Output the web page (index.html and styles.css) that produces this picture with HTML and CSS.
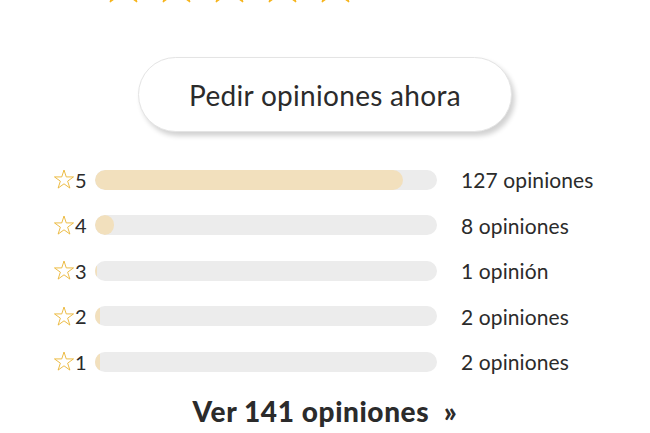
FILE: index.html
```html
<!DOCTYPE html>
<html lang="es">
<head>
  <meta charset="UTF-8" />
  <title>Opiniones</title>
  <link rel="stylesheet" href="styles.css">
</head>
<body>
  <!-- Estrellas de arriba -->
  <div class="top-stars">
    <svg viewBox="-1 -1 2 2" class="big-star"><polygon points="0,-1 0.2245,-0.309 0.951,-0.309 0.363,0.118 0.588,0.809 0,0.382 -0.588,0.809 -0.363,0.118 -0.951,-0.309 -0.2245,-0.309" /></svg>
    <svg viewBox="-1 -1 2 2" class="big-star"><polygon points="0,-1 0.2245,-0.309 0.951,-0.309 0.363,0.118 0.588,0.809 0,0.382 -0.588,0.809 -0.363,0.118 -0.951,-0.309 -0.2245,-0.309" /></svg>
    <svg viewBox="-1 -1 2 2" class="big-star"><polygon points="0,-1 0.2245,-0.309 0.951,-0.309 0.363,0.118 0.588,0.809 0,0.382 -0.588,0.809 -0.363,0.118 -0.951,-0.309 -0.2245,-0.309" /></svg>
    <svg viewBox="-1 -1 2 2" class="big-star"><polygon points="0,-1 0.2245,-0.309 0.951,-0.309 0.363,0.118 0.588,0.809 0,0.382 -0.588,0.809 -0.363,0.118 -0.951,-0.309 -0.2245,-0.309" /></svg>
    <svg viewBox="-1 -1 2 2" class="big-star"><polygon points="0,-1 0.2245,-0.309 0.951,-0.309 0.363,0.118 0.588,0.809 0,0.382 -0.588,0.809 -0.363,0.118 -0.951,-0.309 -0.2245,-0.309" /></svg>
  </div>

  <div class="ask">
    <button class="ask-button">Pedir opiniones ahora</button>
  </div>

  <!-- Desglose por estrellas -->
  <div class="breakdown">
    <div class="row">
      <span class="label"><svg viewBox="-1.1 -1.1 2.2 2.1" class="small-star"><polygon points="0,-1 0.2245,-0.309 0.951,-0.309 0.363,0.118 0.588,0.809 0,0.382 -0.588,0.809 -0.363,0.118 -0.951,-0.309 -0.2245,-0.309" /></svg>5</span>
      <div class="track"><div class="fill" style="width: 90%"></div></div>
      <span class="count">127 opiniones</span>
    </div>
    <div class="row">
      <span class="label"><svg viewBox="-1.1 -1.1 2.2 2.1" class="small-star"><polygon points="0,-1 0.2245,-0.309 0.951,-0.309 0.363,0.118 0.588,0.809 0,0.382 -0.588,0.809 -0.363,0.118 -0.951,-0.309 -0.2245,-0.309" /></svg>4</span>
      <div class="track"><div class="fill" style="width: 5.7%"></div></div>
      <span class="count">8 opiniones</span>
    </div>
    <div class="row">
      <span class="label"><svg viewBox="-1.1 -1.1 2.2 2.1" class="small-star"><polygon points="0,-1 0.2245,-0.309 0.951,-0.309 0.363,0.118 0.588,0.809 0,0.382 -0.588,0.809 -0.363,0.118 -0.951,-0.309 -0.2245,-0.309" /></svg>3</span>
      <div class="track"><div class="fill" style="width: 0.7%"></div></div>
      <span class="count">1 opinión</span>
    </div>
    <div class="row">
      <span class="label"><svg viewBox="-1.1 -1.1 2.2 2.1" class="small-star"><polygon points="0,-1 0.2245,-0.309 0.951,-0.309 0.363,0.118 0.588,0.809 0,0.382 -0.588,0.809 -0.363,0.118 -0.951,-0.309 -0.2245,-0.309" /></svg>2</span>
      <div class="track"><div class="fill" style="width: 1.4%"></div></div>
      <span class="count">2 opiniones</span>
    </div>
    <div class="row">
      <span class="label"><svg viewBox="-1.1 -1.1 2.2 2.1" class="small-star"><polygon points="0,-1 0.2245,-0.309 0.951,-0.309 0.363,0.118 0.588,0.809 0,0.382 -0.588,0.809 -0.363,0.118 -0.951,-0.309 -0.2245,-0.309" /></svg>1</span>
      <div class="track"><div class="fill" style="width: 1.4%"></div></div>
      <span class="count">2 opiniones</span>
    </div>
  </div>

  <a class="see-all" href="#">Ver 141 opiniones&nbsp;&nbsp;»</a>
</body>
</html>
```

FILE: styles.css
```css
body {
  margin: 0;
  font-family: Lato, "Open Sans", sans-serif;
  color: #2b2b2b;
  background: #fff;
  overflow: hidden;
}

.top-stars {
  display: flex;
  gap: 8px;
  padding-left: 101px;
  margin-top: -39px;
  height: 42px;
}

.big-star {
  width: 45px;
  height: 45px;
  flex: none;
}

.big-star polygon {
  fill: #f6b51e;
  stroke: #f6b51e;
  stroke-width: 0.06;
  stroke-linejoin: round;
}

.ask {
  display: flex;
  justify-content: center;
  margin-top: 54px;
}

.ask-button {
  width: 374px;
  height: 75px;
  border: 1px solid #e4e4e4;
  border-radius: 38px;
  background: #fff;
  box-shadow: 3px 4px 5px rgba(0, 0, 0, 0.18);
  font-family: inherit;
  font-size: 28px;
  letter-spacing: 0.3px;
  color: #2b2b2b;
  cursor: pointer;
}

.breakdown {
  display: flex;
  flex-direction: column;
  gap: 24.5px;
  margin-top: 37px;
  padding-left: 53px;
}

.row {
  display: flex;
  align-items: center;
  height: 21px;
}

.label {
  display: flex;
  align-items: center;
  width: 42px;
  font-size: 20px;
}

.small-star {
  width: 22px;
  height: 21px;
}

.small-star polygon {
  fill: none;
  stroke: #eab432;
  stroke-width: 0.09;
  stroke-linejoin: round;
}

.track {
  width: 342px;
  height: 20px;
  border-radius: 10px;
  background: #ececec;
  overflow: hidden;
}

.fill {
  height: 100%;
  border-radius: 10px;
  background: #f2e0bd;
}

.count {
  margin-left: 24px;
  font-size: 21px;
  letter-spacing: 0.1px;
}

.see-all {
  display: block;
  margin-top: 22px;
  text-align: center;
  font-size: 28px;
  font-weight: 900;
  letter-spacing: 0.6px;
  color: #2b2b2b;
  text-decoration: none;
}
```
